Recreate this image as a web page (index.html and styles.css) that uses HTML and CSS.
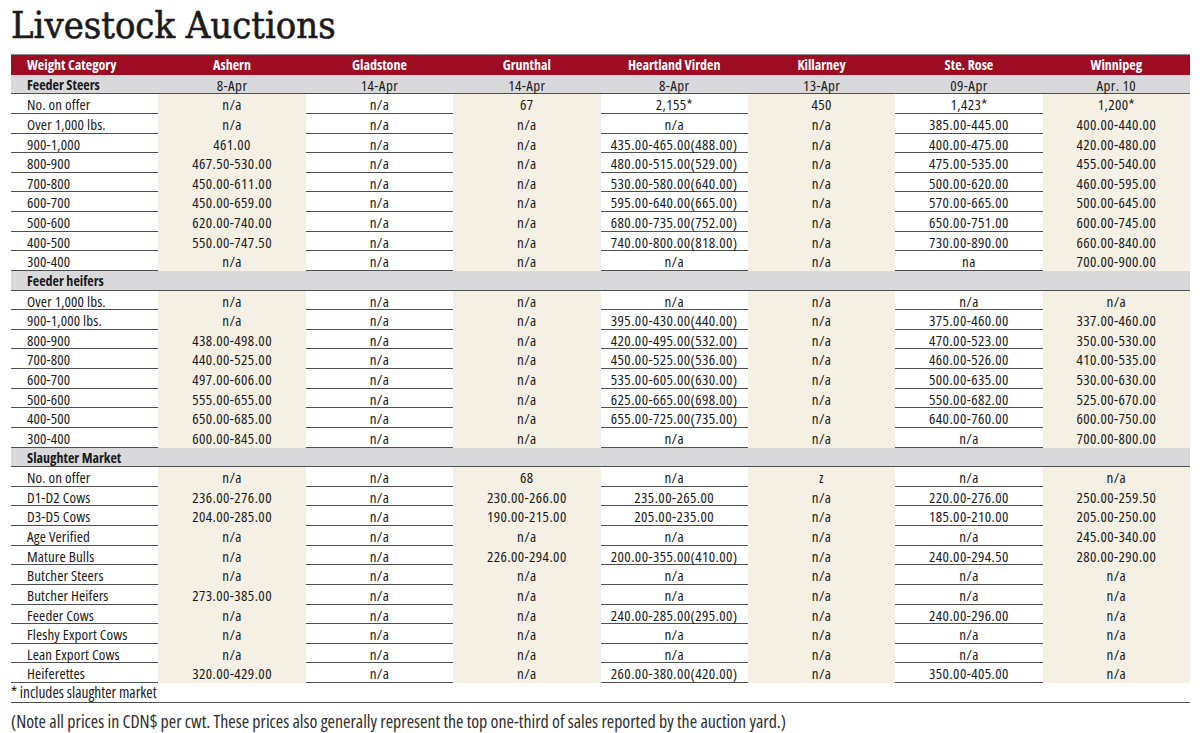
FILE: index.html
```html
<!DOCTYPE html>
<html lang="en">
<head>
<meta charset="utf-8">
<title>Livestock Auctions</title>
<link rel="stylesheet" href="styles.css">
</head>
<body>
<div class="page">
  <h1 class="title">Livestock Auctions</h1>
  <div class="grid" id="grid">
    <div class="row head">
      <div class="c first">Weight Category</div><div class="c">Ashern</div><div class="c">Gladstone</div><div class="c">Grunthal</div><div class="c">Heartland Virden</div><div class="c">Killarney</div><div class="c">Ste. Rose</div><div class="c">Winnipeg</div>
    </div>
    <div class="row section">
      <div class="c first">Feeder Steers</div><div class="c">8-Apr</div><div class="c">14-Apr</div><div class="c">14-Apr</div><div class="c">8-Apr</div><div class="c">13-Apr</div><div class="c">09-Apr</div><div class="c">Apr. 10</div>
    </div>
    <div class="row"><div class="c first">No. on offer</div><div class="c">n/a</div><div class="c">n/a</div><div class="c">67</div><div class="c">2,155*</div><div class="c">450</div><div class="c">1,423*</div><div class="c">1,200*</div></div>
    <div class="row"><div class="c first">Over 1,000 lbs.</div><div class="c">n/a</div><div class="c">n/a</div><div class="c">n/a</div><div class="c">n/a</div><div class="c">n/a</div><div class="c">385.00-445.00</div><div class="c">400.00-440.00</div></div>
    <div class="row"><div class="c first">900-1,000</div><div class="c">461.00</div><div class="c">n/a</div><div class="c">n/a</div><div class="c">435.00-465.00(488.00)</div><div class="c">n/a</div><div class="c">400.00-475.00</div><div class="c">420.00-480.00</div></div>
    <div class="row"><div class="c first">800-900</div><div class="c">467.50-530.00</div><div class="c">n/a</div><div class="c">n/a</div><div class="c">480.00-515.00(529.00)</div><div class="c">n/a</div><div class="c">475.00-535.00</div><div class="c">455.00-540.00</div></div>
    <div class="row"><div class="c first">700-800</div><div class="c">450.00-611.00</div><div class="c">n/a</div><div class="c">n/a</div><div class="c">530.00-580.00(640.00)</div><div class="c">n/a</div><div class="c">500.00-620.00</div><div class="c">460.00-595.00</div></div>
    <div class="row"><div class="c first">600-700</div><div class="c">450.00-659.00</div><div class="c">n/a</div><div class="c">n/a</div><div class="c">595.00-640.00(665.00)</div><div class="c">n/a</div><div class="c">570.00-665.00</div><div class="c">500.00-645.00</div></div>
    <div class="row"><div class="c first">500-600</div><div class="c">620.00-740.00</div><div class="c">n/a</div><div class="c">n/a</div><div class="c">680.00-735.00(752.00)</div><div class="c">n/a</div><div class="c">650.00-751.00</div><div class="c">600.00-745.00</div></div>
    <div class="row"><div class="c first">400-500</div><div class="c">550.00-747.50</div><div class="c">n/a</div><div class="c">n/a</div><div class="c">740.00-800.00(818.00)</div><div class="c">n/a</div><div class="c">730.00-890.00</div><div class="c">660.00-840.00</div></div>
    <div class="row"><div class="c first">300-400</div><div class="c">n/a</div><div class="c">n/a</div><div class="c">n/a</div><div class="c">n/a</div><div class="c">n/a</div><div class="c">na</div><div class="c">700.00-900.00</div></div>
    <div class="row section">
      <div class="c first">Feeder heifers</div><div class="c"></div><div class="c"></div><div class="c"></div><div class="c"></div><div class="c"></div><div class="c"></div><div class="c"></div>
    </div>
    <div class="row"><div class="c first">Over 1,000 lbs.</div><div class="c">n/a</div><div class="c">n/a</div><div class="c">n/a</div><div class="c">n/a</div><div class="c">n/a</div><div class="c">n/a</div><div class="c">n/a</div></div>
    <div class="row"><div class="c first">900-1,000 lbs.</div><div class="c">n/a</div><div class="c">n/a</div><div class="c">n/a</div><div class="c">395.00-430.00(440.00)</div><div class="c">n/a</div><div class="c">375.00-460.00</div><div class="c">337.00-460.00</div></div>
    <div class="row"><div class="c first">800-900</div><div class="c">438.00-498.00</div><div class="c">n/a</div><div class="c">n/a</div><div class="c">420.00-495.00(532.00)</div><div class="c">n/a</div><div class="c">470.00-523.00</div><div class="c">350.00-530.00</div></div>
    <div class="row"><div class="c first">700-800</div><div class="c">440.00-525.00</div><div class="c">n/a</div><div class="c">n/a</div><div class="c">450.00-525.00(536.00)</div><div class="c">n/a</div><div class="c">460.00-526.00</div><div class="c">410.00-535.00</div></div>
    <div class="row"><div class="c first">600-700</div><div class="c">497.00-606.00</div><div class="c">n/a</div><div class="c">n/a</div><div class="c">535.00-605.00(630.00)</div><div class="c">n/a</div><div class="c">500.00-635.00</div><div class="c">530.00-630.00</div></div>
    <div class="row"><div class="c first">500-600</div><div class="c">555.00-655.00</div><div class="c">n/a</div><div class="c">n/a</div><div class="c">625.00-665.00(698.00)</div><div class="c">n/a</div><div class="c">550.00-682.00</div><div class="c">525.00-670.00</div></div>
    <div class="row"><div class="c first">400-500</div><div class="c">650.00-685.00</div><div class="c">n/a</div><div class="c">n/a</div><div class="c">655.00-725.00(735.00)</div><div class="c">n/a</div><div class="c">640.00-760.00</div><div class="c">600.00-750.00</div></div>
    <div class="row"><div class="c first">300-400</div><div class="c">600.00-845.00</div><div class="c">n/a</div><div class="c">n/a</div><div class="c">n/a</div><div class="c">n/a</div><div class="c">n/a</div><div class="c">700.00-800.00</div></div>
    <div class="row section">
      <div class="c first">Slaughter Market</div><div class="c"></div><div class="c"></div><div class="c"></div><div class="c"></div><div class="c"></div><div class="c"></div><div class="c"></div>
    </div>
    <div class="row"><div class="c first">No. on offer</div><div class="c">n/a</div><div class="c">n/a</div><div class="c">68</div><div class="c">n/a</div><div class="c">z</div><div class="c">n/a</div><div class="c">n/a</div></div>
    <div class="row"><div class="c first">D1-D2 Cows</div><div class="c">236.00-276.00</div><div class="c">n/a</div><div class="c">230.00-266.00</div><div class="c">235.00-265.00</div><div class="c">n/a</div><div class="c">220.00-276.00</div><div class="c">250.00-259.50</div></div>
    <div class="row"><div class="c first">D3-D5 Cows</div><div class="c">204.00-285.00</div><div class="c">n/a</div><div class="c">190.00-215.00</div><div class="c">205.00-235.00</div><div class="c">n/a</div><div class="c">185.00-210.00</div><div class="c">205.00-250.00</div></div>
    <div class="row"><div class="c first">Age Verified</div><div class="c">n/a</div><div class="c">n/a</div><div class="c">n/a</div><div class="c">n/a</div><div class="c">n/a</div><div class="c">n/a</div><div class="c">245.00-340.00</div></div>
    <div class="row"><div class="c first">Mature Bulls</div><div class="c">n/a</div><div class="c">n/a</div><div class="c">226.00-294.00</div><div class="c">200.00-355.00(410.00)</div><div class="c">n/a</div><div class="c">240.00-294.50</div><div class="c">280.00-290.00</div></div>
    <div class="row"><div class="c first">Butcher Steers</div><div class="c">n/a</div><div class="c">n/a</div><div class="c">n/a</div><div class="c">n/a</div><div class="c">n/a</div><div class="c">n/a</div><div class="c">n/a</div></div>
    <div class="row"><div class="c first">Butcher Heifers</div><div class="c">273.00-385.00</div><div class="c">n/a</div><div class="c">n/a</div><div class="c">n/a</div><div class="c">n/a</div><div class="c">n/a</div><div class="c">n/a</div></div>
    <div class="row"><div class="c first">Feeder Cows</div><div class="c">n/a</div><div class="c">n/a</div><div class="c">n/a</div><div class="c">240.00-285.00(295.00)</div><div class="c">n/a</div><div class="c">240.00-296.00</div><div class="c">n/a</div></div>
    <div class="row"><div class="c first">Fleshy Export Cows</div><div class="c">n/a</div><div class="c">n/a</div><div class="c">n/a</div><div class="c">n/a</div><div class="c">n/a</div><div class="c">n/a</div><div class="c">n/a</div></div>
    <div class="row"><div class="c first">Lean Export Cows</div><div class="c">n/a</div><div class="c">n/a</div><div class="c">n/a</div><div class="c">n/a</div><div class="c">n/a</div><div class="c">n/a</div><div class="c">n/a</div></div>
    <div class="row"><div class="c first">Heiferettes</div><div class="c">320.00-429.00</div><div class="c">n/a</div><div class="c">n/a</div><div class="c">260.00-380.00(420.00)</div><div class="c">n/a</div><div class="c">350.00-405.00</div><div class="c">n/a</div></div>
    <div class="foot-row">* includes slaughter market</div>
  </div>
  <p class="note">(Note all prices in CDN$ per cwt. These prices also generally represent the top one-third of sales reported by the auction yard.)</p>
</div>
</body>
</html>
```

FILE: styles.css
```css
* { box-sizing: border-box; }
html, body { margin: 0; padding: 0; background: #ffffff; }
body {
  font-family: "Open Sans", "DejaVu Sans", sans-serif;
  font-stretch: 75%;
  color: #1a1a1a;
}
.page {
  width: 1200px;
  height: 733px;
  padding: 0 10px 0 11px;
  overflow: hidden;
}
.title {
  margin: 0;
  height: 54px;
  padding-top: 4px;
  font-family: "DejaVu Serif", serif;
  font-stretch: condensed;
  font-weight: normal;
  font-size: 37.8px;
  line-height: 42px;
  letter-spacing: 0;
  color: #1b1b1b;
  -webkit-text-stroke: 0.6px #1b1b1b;
}
.grid {
  width: 1179px;
  border-top: 1px solid #8a8a8a;
}
.row {
  display: grid;
  grid-template-columns: repeat(8, 1fr);
  height: 19.64px;
  border-bottom: 1.5px solid #4f4f4f;
  font-size: 15px;
  letter-spacing: 0.4px;
}
.c {
  display: flex;
  align-items: center;
  justify-content: center;
  white-space: nowrap;
}
.c.first { justify-content: flex-start; padding-left: 16px; letter-spacing: 0.12px; }
.row:not(.head):not(.section) .c:nth-child(even) { background: #f4f0e4; }
.head {
  background: #9d0c22;
  color: #ffffff;
  font-weight: bold;
  font-size: 14px;
  letter-spacing: 0;
  border-bottom: none;
}
.head .c.first { letter-spacing: 0; }
.section {
  background: #d9d9db;
}
.section .c.first { font-weight: bold; font-size: 14px; letter-spacing: 0; }
.foot-row {
  height: 19.64px;
  display: flex;
  align-items: center;
  font-size: 15.4px;
  border-bottom: 1.5px solid #4f4f4f;
}
.note {
  margin: 0;
  padding-top: 6px;
  font-size: 17.9px;
  color: #2e2e2e;
  white-space: nowrap;
}
```
